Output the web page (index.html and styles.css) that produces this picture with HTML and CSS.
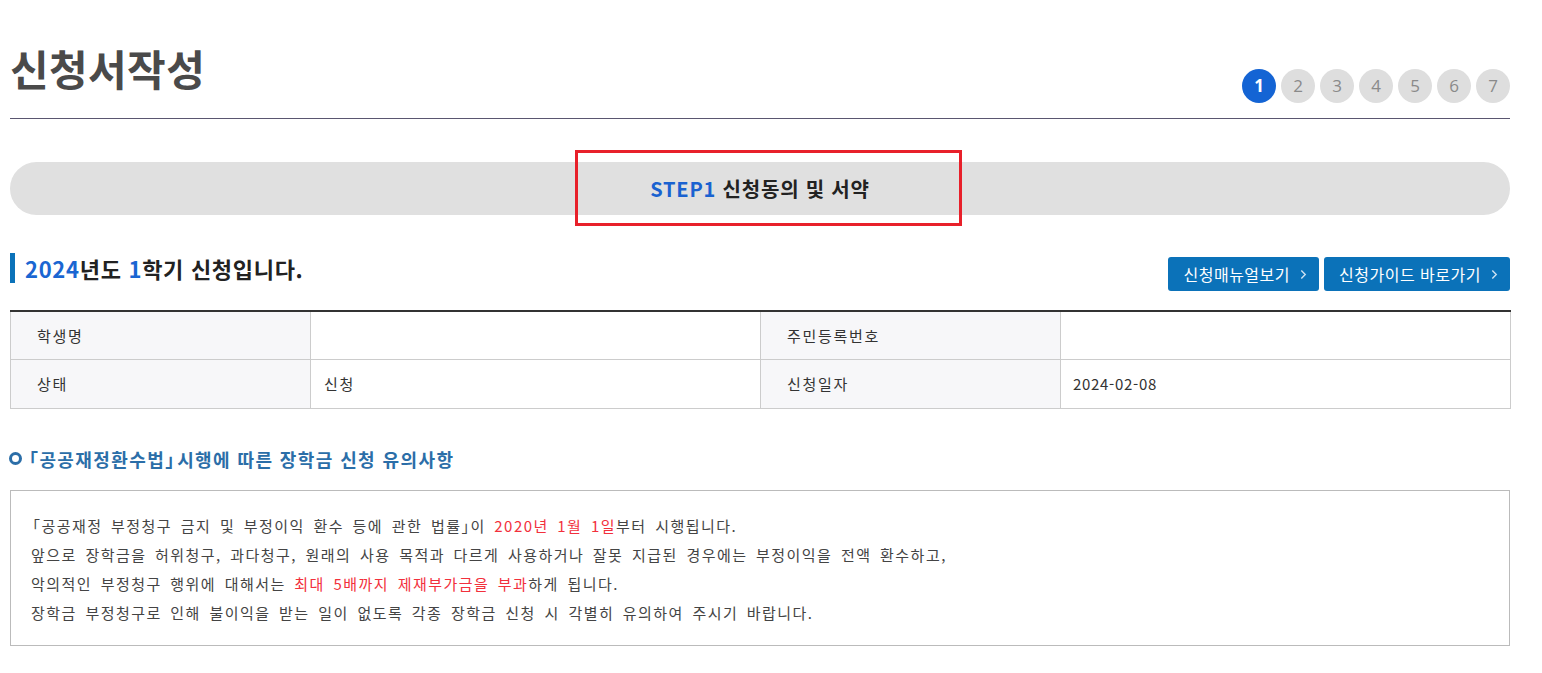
FILE: index.html
```html
<!DOCTYPE html>
<html lang="ko">
<head>
<meta charset="utf-8">
<title>신청서작성</title>
<link rel="stylesheet" href="styles.css">
</head>
<body>
<div class="page">
  <div class="title-row">
    <h1 class="title">신청서작성</h1>
    <ol class="steps">
      <li class="step on">1</li>
      <li class="step">2</li>
      <li class="step">3</li>
      <li class="step">4</li>
      <li class="step">5</li>
      <li class="step">6</li>
      <li class="step">7</li>
    </ol>
  </div>

  <div class="step-bar">
    <p class="step-name"><span class="blue">STEP1</span> 신청동의 및 서약</p>
    <span class="highlight"></span>
  </div>

  <div class="sub-row">
    <h2 class="sub-title"><span class="blue">2024</span>년도 <span class="blue">1</span>학기 신청입니다.</h2>
    <div class="btns">
      <a class="btn" href="#">신청매뉴얼보기<svg class="chev" viewBox="0 0 8 12" width="7" height="11"><path d="M1.5 1.5 L6 6 L1.5 10.5" fill="none" stroke="currentColor" stroke-width="1.6"/></svg></a>
      <a class="btn" href="#">신청가이드 바로가기<svg class="chev" viewBox="0 0 8 12" width="7" height="11"><path d="M1.5 1.5 L6 6 L1.5 10.5" fill="none" stroke="currentColor" stroke-width="1.6"/></svg></a>
    </div>
  </div>

  <table class="info">
    <tr>
      <th>학생명</th>
      <td></td>
      <th>주민등록번호</th>
      <td></td>
    </tr>
    <tr>
      <th>상태</th>
      <td>신청</td>
      <th>신청일자</th>
      <td class="num">2024-02-08</td>
    </tr>
  </table>

  <h3 class="notice-title"><span class="ring"></span><span class="bo">「</span>공공재정환수법<span class="bc">」</span>시행에 따른 장학금 신청 유의사항</h3>
  <div class="notice-box">
    <p><span class="bo">「</span>공공재정 부정청구 금지 및 부정이익 환수 등에 관한 법률<span class="bc">」</span>이 <span class="red">2020년 1월 1일</span>부터 시행됩니다.</p>
    <p>앞으로 장학금을 허위청구, 과다청구, 원래의 사용 목적과 다르게 사용하거나 잘못 지급된 경우에는 부정이익을 전액 환수하고,</p>
    <p>악의적인 부정청구 행위에 대해서는 <span class="red">최대 5배까지 제재부가금을 부과</span>하게 됩니다.</p>
    <p>장학금 부정청구로 인해 불이익을 받는 일이 없도록 각종 장학금 신청 시 각별히 유의하여 주시기 바랍니다.</p>
  </div>
</div>
</body>
</html>
```

FILE: styles.css
```css
* { box-sizing: border-box; }
html, body { margin: 0; padding: 0; background: #fff; }
body {
  font-family: "Noto Sans CJK KR", "Noto Sans", sans-serif;
  color: #333;
}
.page {
  width: 1500px;
  margin-left: 10px;
  padding-top: 40px;
}
.title-row {
  display: flex;
  justify-content: space-between;
  align-items: flex-end;
  border-bottom: 1px solid #5a5670;
  padding-bottom: 15px;
}
.title {
  margin: 0 0 7px;
  font-size: 42px;
  line-height: 56px;
  font-weight: 700;
  color: #4a4a4a;
  letter-spacing: 0.4px;
  align-self: flex-start;
}
.steps {
  list-style: none;
  margin: 0;
  padding: 0;
  display: flex;
  gap: 5px;
}
.step {
  width: 34px;
  height: 34px;
  border-radius: 50%;
  background: #dedede;
  color: #8a8a8a;
  font-family: "Open Sans", "Noto Sans", sans-serif;
  font-size: 17px;
  line-height: 34px;
  text-align: center;
}
.step.on {
  background: #1464d4;
  color: #fff;
  font-weight: 700;
}
.step-bar {
  position: relative;
  margin-top: 43px;
  height: 53px;
  border-radius: 27px;
  background: #e0e0e0;
  display: flex;
  align-items: center;
  justify-content: center;
}
.step-name {
  margin: 0;
  font-size: 20px;
  font-weight: 700;
  color: #222;
  letter-spacing: 0.8px;
}
.blue { color: #1a62d0; }
.highlight {
  position: absolute;
  left: 565px;
  top: -12px;
  width: 387px;
  height: 76px;
  border: 3px solid #e8202a;
}
.sub-row {
  display: flex;
  justify-content: space-between;
  align-items: flex-start;
  margin-top: 38px;
}
.sub-title {
  margin: 0;
  padding-left: 10px;
  border-left: 5px solid #0b72b9;
  font-size: 22px;
  line-height: 30px;
  font-weight: 700;
  color: #222;
  letter-spacing: 0.7px;
}
.sub-title .blue { color: #1a66d2; }
.btns {
  display: flex;
  gap: 5px;
  margin-top: 4px;
}
.btn {
  display: flex;
  align-items: center;
  gap: 10px;
  height: 34px;
  padding: 0 12px 0 15px;
  background: #0b72b9;
  color: #fff;
  border-radius: 3px;
  text-decoration: none;
  font-size: 16px;
  letter-spacing: 0.5px;
}
.chev { display: block; color: #cfe2f2; }
.info {
  width: 100%;
  margin-top: 19px;
  border-collapse: collapse;
  table-layout: fixed;
  border-top: 2px solid #333;
  font-size: 15px;
}
.info th, .info td {
  height: 49px;
  border: 1px solid #ccc;
  text-align: left;
  font-weight: 400;
  color: #333;
  letter-spacing: 1.7px;
}
.info tr:first-child th, .info tr:first-child td { border-top: 0; height: 48px; }
.info th {
  width: 300px;
  background: #f7f7f9;
  padding-left: 26px;
}
.info td {
  width: 450px;
  padding-left: 13px;
}
.info td.num { letter-spacing: 0.7px; padding-left: 12px; }
.notice-title {
  display: flex;
  align-items: center;
  margin: 38px 0 0 -1px;
  font-size: 18px;
  line-height: 24px;
  font-weight: 700;
  color: #2b6ea8;
  letter-spacing: 1.4px;
}
.ring {
  width: 13px;
  height: 13px;
  border-radius: 50%;
  border: 3.5px solid #2b6ea8;
  margin-right: 3px;
}
.bo { margin-left: -6px; }
.notice-box .bc { letter-spacing: -6px; }
.notice-title .bo { margin-left: -5px; }
.notice-title .bc { letter-spacing: -6px; }
.notice-box {
  margin-top: 19px;
  border: 1px solid #bbb;
  padding: 20px 20px 18px;
}
.notice-box p {
  margin: 0;
  font-size: 15px;
  line-height: 29px;
  color: #444;
  letter-spacing: 1.45px;
  word-spacing: 3px;
}
.red { color: #f2303c; }
```
